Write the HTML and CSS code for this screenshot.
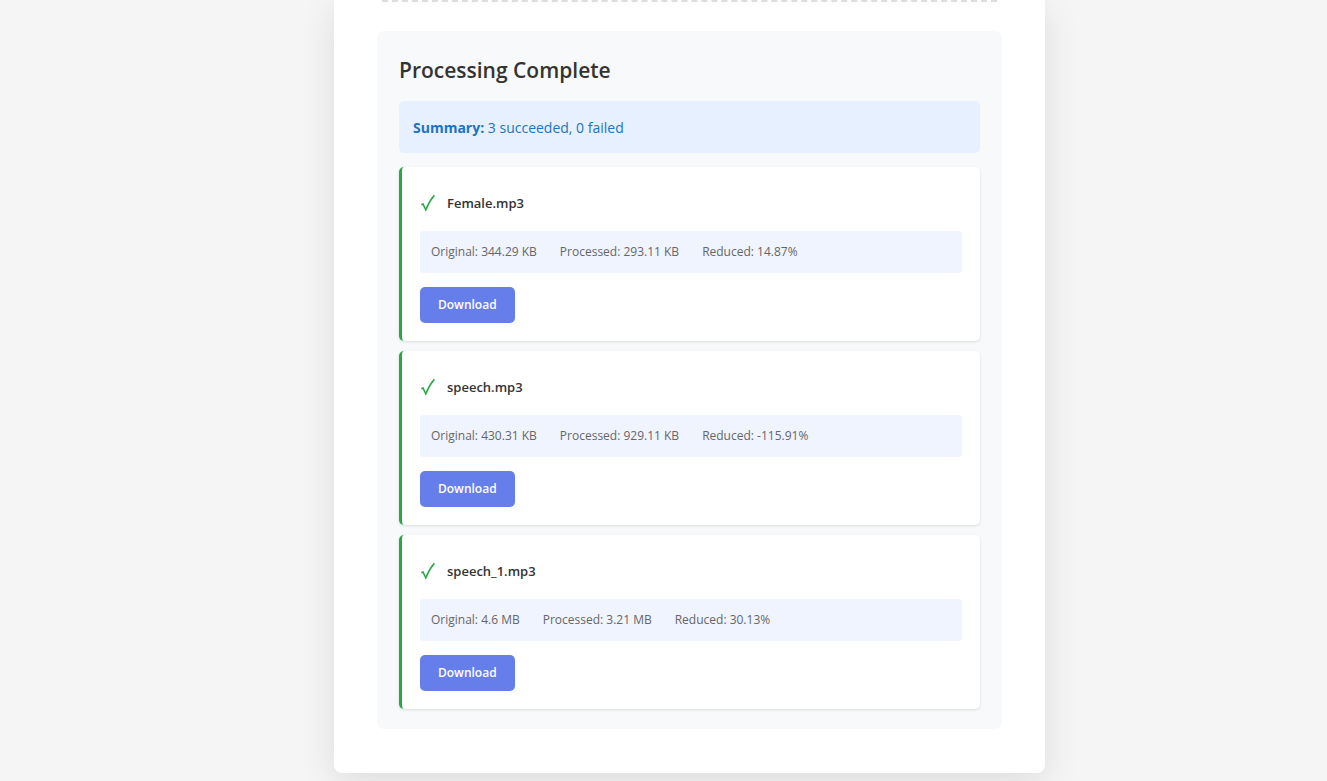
FILE: index.html
```
<!DOCTYPE html>
<html lang="en">
<head>
<meta charset="utf-8">
<meta name="viewport" content="width=device-width, initial-scale=1">
<title>Processing Complete</title>
<link rel="stylesheet" href="styles.css">
</head>
<body>
<main class="container">
	<div class="upload-edge"></div>
	<section class="results">
		<h2>Processing Complete</h2>
		<div class="summary"><strong>Summary:</strong> 3 succeeded, 0 failed</div>
		<div class="result-item">
			<div class="result-header">
				<svg class="check" viewBox="0 0 16 20" aria-hidden="true"><path d="M1.4 11.8 L3 11 L5.8 16.8 C8 11 11 6 14.4 2.2"/></svg>
				<span class="filename">Female.mp3</span>
			</div>
			<div class="stats">
				<span>Original: 344.29 KB</span>
				<span>Processed: 293.11 KB</span>
				<span>Reduced: 14.87%</span>
			</div>
			<button type="button" class="download">Download</button>
		</div>
		<div class="result-item">
			<div class="result-header">
				<svg class="check" viewBox="0 0 16 20" aria-hidden="true"><path d="M1.4 11.8 L3 11 L5.8 16.8 C8 11 11 6 14.4 2.2"/></svg>
				<span class="filename">speech.mp3</span>
			</div>
			<div class="stats">
				<span>Original: 430.31 KB</span>
				<span>Processed: 929.11 KB</span>
				<span>Reduced: -115.91%</span>
			</div>
			<button type="button" class="download">Download</button>
		</div>
		<div class="result-item">
			<div class="result-header">
				<svg class="check" viewBox="0 0 16 20" aria-hidden="true"><path d="M1.4 11.8 L3 11 L5.8 16.8 C8 11 11 6 14.4 2.2"/></svg>
				<span class="filename">speech_1.mp3</span>
			</div>
			<div class="stats">
				<span>Original: 4.6 MB</span>
				<span>Processed: 3.21 MB</span>
				<span>Reduced: 30.13%</span>
			</div>
			<button type="button" class="download">Download</button>
		</div>
	</section>
</main>
</body>
</html>
```
FILE: styles.css
```
* {
	box-sizing: border-box;
}
body {
	margin: 0;
	padding: 0 20px 8px 72px;
	background: #f5f5f5;
	color: #333;
	font-family: "Segoe UI", "Open Sans", "Noto Sans", sans-serif;
	font-size: 12px;
	line-height: 20px;
}
.container {
	max-width: 711px;
	margin: 0 auto;
	padding: 0 43px 44px;
	background: #fff;
	border-radius: 0 0 8px 8px;
	box-shadow: 0 9px 36px rgba(0, 0, 0, 0.1);
}
/* bottom edge of the drop zone */
.upload-edge {
	height: 2px;
	margin: 0 5px 29px;
	border-bottom: 2px dashed #ddd;
}
.results {
	padding: 22px 22px 20px;
	background: #f8f9fa;
	border-radius: 7px;
}
.results h2 {
	margin: 0 0 14px;
	font-size: 21px;
	font-weight: 600;
	line-height: 34px;
}
.summary {
	margin-bottom: 14px;
	padding: 15px 14px 13px;
	background: #e7f0fe;
	border-radius: 5px;
	color: #1e73be;
	font-size: 14px;
	font-weight: 500;
	line-height: 24px;
}
.summary strong {
	font-weight: 700;
}
.result-item {
	margin-bottom: 10px;
	padding: 18px;
	background: #fff;
	border-left: 3px solid #28a745;
	border-radius: 5px;
	box-shadow: 0 1px 3px rgba(0, 0, 0, 0.12);
}
.result-item:last-child {
	margin-bottom: 0;
}
.result-header {
	display: flex;
	align-items: center;
	gap: 11px;
	height: 36px;
	margin-bottom: 10px;
}
.check {
	width: 16px;
	height: 20px;
	fill: none;
	stroke: #28a745;
	stroke-width: 1.6;
}
.filename {
	font-size: 13px;
	font-weight: 600;
}
.stats {
	display: flex;
	flex-wrap: wrap;
	gap: 0 23px;
	margin-bottom: 14px;
	padding: 11px;
	background: #f0f4ff;
	border-radius: 4px;
	color: #666;
}
.download {
	display: block;
	padding: 8px 18px;
	border: 0;
	border-radius: 5px;
	background: #667eea;
	color: #fff;
	font-family: inherit;
	font-size: 12px;
	font-weight: 600;
	line-height: 20px;
	cursor: pointer;
}
.download:hover {
	background: #5568d3;
}
```
